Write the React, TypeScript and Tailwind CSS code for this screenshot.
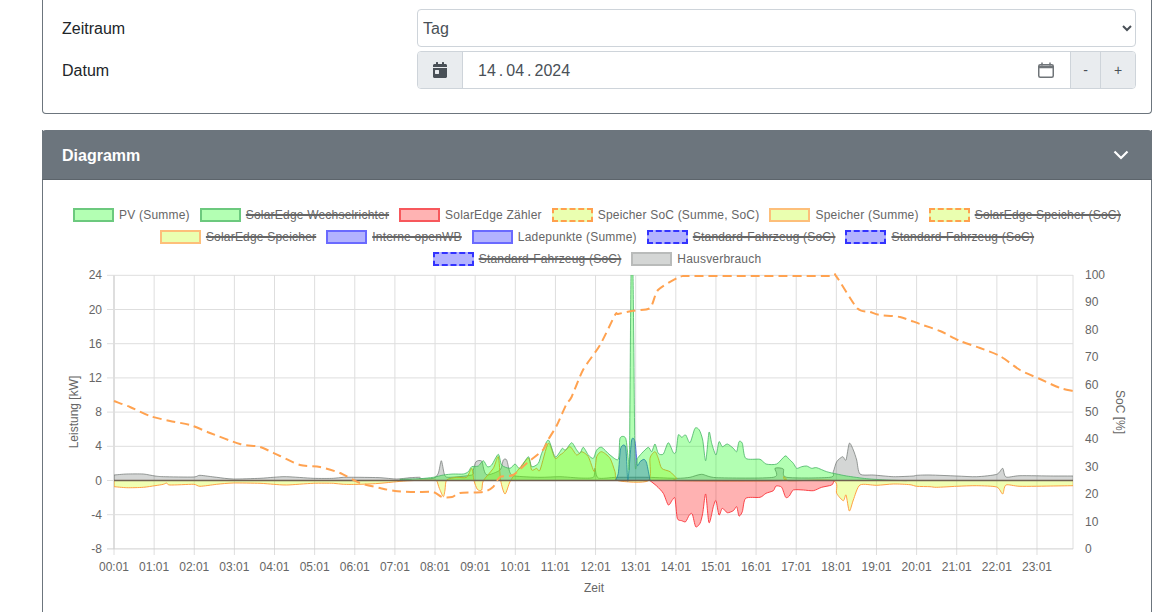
import { FaCalendarDay } from 'react-icons/fa';

const ZERO = 480.5;
const LEFT = 114;
const RIGHT = 1073;
const TOP = 275;
const BOTTOM = 549;

type Pt = [number, number];

// traced from the picture: flat x,y pairs at 3x around an origin
const t = (ox: number, oy: number, v: number[]): Pt[] => {
  const out: Pt[] = [];
  for (let i = 0; i < v.length; i += 2) out.push([ox + v[i] / 3, oy + v[i + 1] / 3]);
  return out;
};

const line = (pts: Pt[]) => {
  let d = `M${pts[0][0]} ${pts[0][1]}`;
  for (let i = 0; i < pts.length - 1; i++) {
    const p0 = pts[i - 1] ?? pts[i];
    const p1 = pts[i];
    const p2 = pts[i + 1];
    const p3 = pts[i + 2] ?? p2;
    const c1x = p1[0] + (p2[0] - p0[0]) / 8;
    const c1y = p1[1] + (p2[1] - p0[1]) / 8;
    const c2x = p2[0] - (p3[0] - p1[0]) / 8;
    const c2y = p2[1] - (p3[1] - p1[1]) / 8;
    d += ` C${c1x.toFixed(1)} ${c1y.toFixed(1)} ${c2x.toFixed(1)} ${c2y.toFixed(1)} ${p2[0].toFixed(1)} ${p2[1].toFixed(1)}`;
  }
  return d;
};

const area = (pts: Pt[]) => `${line(pts)} L${pts[pts.length - 1][0]} ${ZERO} L${pts[0][0]} ${ZERO} Z`;

const green: Pt[] = [
  [LEFT, ZERO],
  [395, ZERO],
  ...t(400, 400, [0, 238, 60, 236, 100, 232, 130, 225, 160, 222, 190, 222, 205, 215, 215, 200, 235, 198, 250, 182, 262, 200, 275, 195, 295, 163, 305, 195, 330, 205, 345, 192, 360, 205, 385, 170, 395, 200, 415, 190, 425, 160, 445, 120, 465, 170, 480, 155, 487, 145, 497, 150, 515, 128, 530, 150, 540, 160, 550, 142, 565, 165, 580, 175, 590, 150, 605, 142, 630, 165, 655, 178, 660, 115, 677, 115, 685, 178]),
  [629.5, 459],
  [631, 276],
  [633, 276],
  [635, 459],
  ...t(400, 400, [712, 175, 725, 160]),
  ...t(640, 400, [25, 142, 35, 155, 45, 132, 55, 160, 70, 162, 85, 128, 100, 158, 108, 155, 115, 105, 125, 112, 137, 105, 150, 128, 165, 85, 178, 90, 188, 120, 197, 182, 207, 97, 215, 130, 228, 165, 237, 125, 247, 140, 262, 132, 280, 145, 290, 155, 297, 125, 307, 130, 317, 175, 360, 178, 378, 192, 410, 192, 435, 168, 445, 175, 460, 190, 470, 205, 485, 200, 500, 198, 515, 205, 530, 203, 560, 215, 590, 222, 620, 228, 680, 236, 740, 240, 800, 242]),
];

const speicher: Pt[] = [
  ...t(60, 440, [162, 140, 200, 143, 250, 142, 285, 137, 310, 133, 320, 129, 330, 135, 400, 133, 420, 139, 470, 133, 520, 129, 600, 130, 640, 133, 680, 135, 760, 130, 820, 130, 850, 133, 900, 133, 960, 130, 1010, 125, 1050, 122, 1080, 121]),
  ...t(400, 400, [100, 241, 110, 242, 118, 265, 130, 290, 135, 270, 140, 240, 170, 232, 200, 232, 215, 205, 222, 242, 232, 268, 245, 270, 250, 242, 280, 205, 295, 170, 302, 242, 315, 282, 330, 245, 350, 215, 385, 175, 395, 210, 410, 205, 420, 210, 445, 130, 465, 175, 480, 165, 490, 158, 510, 140, 530, 165, 545, 155, 565, 170, 583, 215, 590, 170, 605, 155, 630, 175, 645, 215, 655, 242, 745, 242, 750, 175, 765, 155, 775, 175, 785, 205, 810, 215, 830, 235, 838, 242]),
  ...t(640, 400, [420, 242, 430, 230, 445, 242, 580, 242, 590, 280, 610, 302, 618, 285, 628, 333, 640, 300, 660, 255]),
  ...t(840, 380, [110, 316, 160, 312, 210, 314, 230, 319, 270, 320, 290, 322, 350, 319, 410, 317, 470, 321, 488, 342, 498, 315, 540, 319, 640, 318, 700, 317]),
];

const haus: Pt[] = [
  ...t(60, 440, [162, 105, 200, 102, 250, 102, 285, 108, 310, 110, 400, 111, 420, 106, 470, 112, 520, 117, 600, 115, 640, 112, 680, 110, 760, 115, 820, 115, 850, 112, 900, 112, 960, 113, 1010, 117, 1050, 113, 1080, 112]),
  ...t(400, 400, [60, 236, 100, 235, 115, 220, 124, 182, 133, 222, 145, 232, 215, 225, 220, 210, 228, 185, 245, 183, 252, 210, 262, 225, 300, 210, 310, 180, 320, 180, 330, 218, 345, 228, 420, 232, 480, 230, 540, 234, 580, 232, 585, 205, 595, 234, 650, 232, 745, 232]),
  ...t(640, 400, [110, 235, 150, 232, 185, 223, 230, 233, 400, 232, 405, 205, 430, 207, 440, 232, 570, 232, 580, 215, 590, 185, 608, 170, 618, 180, 628, 130, 640, 150, 650, 180, 660, 222, 700, 225, 760, 230, 820, 228]),
  ...t(840, 380, [230, 286, 270, 285, 350, 288, 410, 290, 470, 283, 488, 265, 498, 291, 540, 287, 640, 288, 700, 288]),
];

const lade: Pt[] = t(400, 400, [645, 242, 655, 220, 662, 145, 677, 142, 683, 242, 687, 210, 695, 120, 705, 125, 712, 195, 720, 185, 732, 178, 740, 190, 750, 240]);

const zaehler: Pt[] = t(640, 400, [30, 242, 50, 258, 70, 280, 85, 315, 97, 300, 105, 295, 112, 355, 125, 362, 137, 365, 148, 345, 157, 342, 167, 380, 180, 370, 188, 340, 197, 282, 207, 368, 220, 320, 228, 302, 237, 345, 247, 325, 262, 338, 280, 332, 290, 320, 297, 348, 307, 335, 317, 295, 360, 292, 378, 280, 400, 272, 408, 258, 425, 262, 437, 292, 448, 288, 460, 270, 490, 270, 520, 272, 545, 262, 575, 255, 582, 242]);

const soc: Pt[] = [[114, 401], [130, 407], [150, 416], [170, 421], [190, 425], [210, 433], [240, 444], [260, 447], [280, 456], [300, 465], [320, 467], [340, 473], [360, 483], [380, 488], [395, 491], [415, 492], [433, 492], [442, 497], [452, 497], [460, 493], [483, 492], [493, 487], [500, 477], [513, 475], [527, 463], [543, 450], [548, 440], [557, 425], [566, 405], [571.7, 396.7], [583, 370], [600, 345], [615, 315], [618, 314], [633, 310.7], [650, 308], [658, 290], [677, 278], [683, 276], [690, 276], [760, 276], [830, 276], [836, 276], [857, 308], [870, 312], [880, 315], [900, 317], [920, 324], [940, 331], [960, 341], [980, 348], [1000, 356], [1020, 370], [1040, 379], [1060, 388], [1073, 391]];

const hours = Array.from({ length: 24 }, (_, i) => i);
const hourX = (h: number) => LEFT + h * 40.13;
const kw = [24, 20, 16, 12, 8, 4, 0, -4, -8];
const percent = [100, 90, 80, 70, 60, 50, 40, 30, 20, 10, 0];

const swatch = {
  green: 'bg-[#b3ffb3] border-2 border-[#6cc97e]',
  red: 'bg-[#ffb3b3] border-2 border-[#f7585c]',
  socOrange: 'bg-[#eaffb0] border-2 border-dashed border-[#ffa04d]',
  yellow: 'bg-[#eaffb0] border-2 border-[#fdbf7a]',
  blue: 'bg-[#b3b3ff] border-2 border-[#6a6aff]',
  socBlue: 'bg-[#b3b3ff] border-2 border-dashed border-[#3333ff]',
  gray: 'bg-[#d4d6d5] border-2 border-[#b9bbba]',
};

type LegendEntry = { label: string; box: string; off?: boolean };

const legendRows: LegendEntry[][] = [
  [
    { label: 'PV (Summe)', box: swatch.green },
    { label: 'SolarEdge Wechselrichter', box: swatch.green, off: true },
    { label: 'SolarEdge Zähler', box: swatch.red },
    { label: 'Speicher SoC (Summe, SoC)', box: swatch.socOrange },
    { label: 'Speicher (Summe)', box: swatch.yellow },
    { label: 'SolarEdge Speicher (SoC)', box: swatch.socOrange, off: true },
  ],
  [
    { label: 'SolarEdge Speicher', box: swatch.yellow, off: true },
    { label: 'Interne openWB', box: swatch.blue, off: true },
    { label: 'Ladepunkte (Summe)', box: swatch.blue },
    { label: 'Standard-Fahrzeug (SoC)', box: swatch.socBlue, off: true },
    { label: 'Standard-Fahrzeug (SoC)', box: swatch.socBlue, off: true },
  ],
  [
    { label: 'Standard-Fahrzeug (SoC)', box: swatch.socBlue, off: true },
    { label: 'Hausverbrauch', box: swatch.gray },
  ],
];

function Chart() {
  const grid = '#dedede';
  return (
    <svg viewBox="43 266 1108 346" width={1108} height={346} className="block -mt-1" fontSize={12} fill="#666">
      <defs>
        <clipPath id="plot">
          <rect x={LEFT} y={TOP} width={RIGHT - LEFT} height={BOTTOM - TOP} />
        </clipPath>
      </defs>

      {/* grid */}
      {hours.map((h) => (
        <line key={h} x1={hourX(h)} x2={hourX(h)} y1={TOP} y2={555} stroke={grid} />
      ))}
      <line x1={RIGHT} x2={RIGHT} y1={TOP} y2={BOTTOM} stroke={grid} />
      <line x1={LEFT} x2={LEFT} y1={TOP} y2={BOTTOM} stroke="#dedede" strokeWidth={2} />
      {kw.map((v) => {
        const y = ZERO - v * 8.55;
        return <line key={v} x1={107} x2={RIGHT} y1={y} y2={y} stroke={v === -8 ? '#cfcfcf' : grid} />;
      })}

      {/* series */}
      <g clipPath="url(#plot)" strokeLinejoin="round">
        <path d={area(haus)} fill="rgba(50,60,55,0.21)" stroke="rgba(110,115,112,0.7)" strokeWidth={1} />
        <path d={area(speicher)} fill="rgba(204,255,0,0.3)" stroke="rgba(255,155,60,0.95)" strokeWidth={1} />
        <path d={area(zaehler)} fill="rgba(255,0,0,0.3)" stroke="rgba(250,50,55,0.9)" strokeWidth={1} />
        <path d={area(lade)} fill="rgba(0,0,255,0.3)" stroke="rgba(40,80,220,0.8)" strokeWidth={1} />
        <path d={area(green)} fill="rgba(0,255,0,0.3)" stroke="rgba(70,180,100,0.8)" strokeWidth={1} />
        <line x1={LEFT} x2={RIGHT} y1={ZERO} y2={ZERO} stroke="#6f6050" strokeWidth={1.4} />
      </g>
      <path d={line(soc)} fill="none" stroke="#ffa250" strokeWidth={2} strokeDasharray="9 5" />

      {/* axes */}
      {kw.map((v) => (
        <text key={v} x={102} y={ZERO - v * 8.55 + 4} textAnchor="end">
          {v}
        </text>
      ))}
      {percent.map((v) => (
        <text key={v} x={1085} y={BOTTOM - v * 2.74 + 4}>
          {v}
        </text>
      ))}
      {hours.map((h) => (
        <text key={h} x={hourX(h)} y={571} textAnchor="middle">
          {`${String(h).padStart(2, '0')}:01`}
        </text>
      ))}
      <text x={594} y={592} textAnchor="middle">
        Zeit
      </text>
      <text transform="translate(78 412) rotate(-90)" textAnchor="middle">
        Leistung [kW]
      </text>
      <text transform="translate(1116 412) rotate(90)" textAnchor="middle">
        SoC [%]
      </text>
    </svg>
  );
}

export default function App() {
  return (
    <div className="h-[612px] w-[1164px] overflow-hidden bg-white text-[16px] text-[#212529] font-['Liberation_Sans',Arial,sans-serif]">
      <div className="ml-[42px] w-[1110px]">
        {/* Filter */}
        <div className="h-[114px] border-x border-b border-[#6c757d] rounded-b pt-[9px] pl-[19px] pr-[15px] mb-4">
          <div className="flex items-center mb-1">
            <label className="w-[355px] pt-[2px]">Zeitraum</label>
            <select className="flex-1 h-[38px] border border-[#ced4da] rounded bg-white text-[#495057] pl-[1px]">
              <option>Tag</option>
            </select>
          </div>
          <div className="flex items-center">
            <label className="w-[355px] pt-[2px]">Datum</label>
            <div className="flex flex-1 h-[38px] border border-[#ced4da] rounded overflow-hidden text-[#495057]">
              <div className="w-[45px] bg-[#e9ecef] border-r border-[#ced4da] flex items-center justify-center">
                <FaCalendarDay className="text-[16px]" />
              </div>
              <div className="flex-1 flex items-center justify-between pl-[15px] pr-[16px]">
                <span className="flex pt-[2px]">
                  <span>14</span>
                  <span className="mx-[3px]">.</span>
                  <span>04</span>
                  <span className="mx-[3px]">.</span>
                  <span>2024</span>
                </span>
                <svg width="16" height="16" viewBox="0 0 16 16" fill="none" stroke="#6f7478">
                  <rect x="0.75" y="2.75" width="14.5" height="12.5" rx="1.5" strokeWidth="1.5" />
                  <path d="M1 5h14" strokeWidth="2.5" />
                  <path d="M4 0.5v3M12 0.5v3" strokeWidth="1.5" />
                </svg>
              </div>
              <button className="w-[30px] bg-[#e9ecef] border-l border-[#ced4da] text-[14px]">-</button>
              <button className="w-[35px] bg-[#e9ecef] border-l border-[#ced4da] text-[14px]">+</button>
            </div>
          </div>
        </div>

        {/* Diagramm */}
        <div className="border-x border-[#6c757d]">
          <div className="-mx-px h-[50px] bg-[#6c757d] border-b border-[#5c646b] rounded-t flex items-center justify-between pl-5 pr-[23px] text-white font-bold">
            <span className="pt-[2px]">Diagramm</span>
            <svg width="16" height="10" viewBox="0 0 16 10" fill="none" stroke="#fff" strokeWidth="2.2">
              <path d="M1.5 1.5L8 8l6.5-6.5" />
            </svg>
          </div>
          <div className="pt-6">
            {legendRows.map((row, i) => (
              <div key={i} className="h-[22px] flex items-center justify-center gap-[10px] text-[12px] tracking-[0.2px] text-[#666]">
                {row.map((item, j) => (
                  <div key={j} className="flex items-center gap-[5px]">
                    <span className={`w-[41px] h-[14px] ${item.box}`} />
                    <span className={item.off ? 'line-through decoration-[1.5px]' : ''}>{item.label}</span>
                  </div>
                ))}
              </div>
            ))}
            <Chart />
          </div>
        </div>
      </div>
    </div>
  );
}
